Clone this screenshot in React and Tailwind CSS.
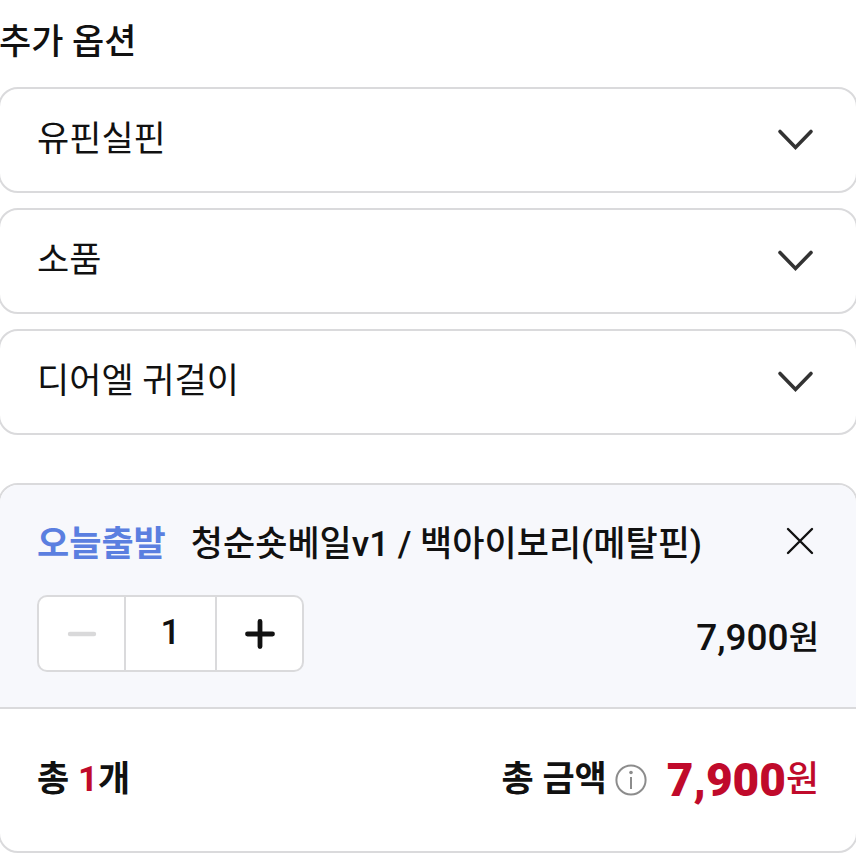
import { useState } from 'react';

const OPTIONS = [
    { id: 'hairpin', name: '유핀실핀' },
    { id: 'props', name: '소품' },
    { id: 'earring', name: '디어엘 귀걸이' },
];

const UNIT_PRICE = 7900;

const OptionSelect = ({ id, name }) => (
    <div className="relative">
        <select
            id={id}
            aria-label={name}
            defaultValue=""
            className="block h-[106px] w-full appearance-none rounded-[20px] border-2 border-[#dadadc] bg-white pr-24 pl-[37px] text-[35px] text-[#111]"
        >
            <option value="">{name}</option>
        </select>
        <svg
            className="pointer-events-none absolute top-1/2 right-[42px] h-10 w-10 -translate-y-1/2"
            viewBox="0 0 40 40"
            fill="none"
            stroke="#333"
            strokeWidth="3.6"
            strokeLinecap="round"
            aria-hidden="true"
        >
            <path d="M4 11.5 19.5 27.5 35 11.5" />
        </svg>
    </div>
);

const App = () => {
    const [quantity, setQuantity] = useState(1);
    const total = (UNIT_PRICE * quantity).toLocaleString();

    return (
        <main className="overflow-hidden bg-white font-[Roboto,'Noto_Sans_CJK_KR',sans-serif] text-[#111]">
            {/* Cards bleed past the screen edge so only their corners curve in */}
            <div className="-mx-0.5">
                <h2 className="pt-[17px] pl-px text-[35px] leading-[52px] font-medium">추가 옵션</h2>

                <div className="mt-[18px] flex flex-col gap-[15px]">
                    {OPTIONS.map((option) => (
                        <OptionSelect key={option.id} id={option.id} name={option.name} />
                    ))}
                </div>

                <section className="mt-12 overflow-hidden rounded-[20px] border-2 border-[#dadadc]">
                    {/* Selected item */}
                    <div className="border-b-2 border-[#dadadc] bg-[#f7f8fc] px-[37px] pt-[34px] pb-[35px]">
                        <div className="flex items-start justify-between">
                            <p className="flex gap-[25px] text-[35px] leading-[52px] font-medium">
                                <strong className="font-bold text-[#5b7fe0]">오늘출발</strong>
                                <span>청순숏베일v1 / 백아이보리(메탈핀)</span>
                            </p>
                            <button type="button" aria-label="삭제" className="mt-2 mr-[5px] shrink-0">
                                <svg className="h-7 w-7" viewBox="0 0 28 28" fill="none" stroke="#111" strokeWidth="2.4" strokeLinecap="round" aria-hidden="true">
                                    <path d="M2 2 26 26M26 2 2 26" />
                                </svg>
                            </button>
                        </div>

                        <div className="mt-6 flex items-center justify-between">
                            <div className="flex h-[77px] overflow-hidden rounded-[10px] border-2 border-[#dadadc] bg-white">
                                <button
                                    type="button"
                                    aria-label="수량 감소"
                                    disabled={quantity <= 1}
                                    onClick={() => setQuantity(quantity - 1)}
                                    className="flex w-[85px] items-center justify-center text-[#111] disabled:text-[#d9d9da]"
                                >
                                    <svg className="h-8 w-8" viewBox="0 0 32 32" fill="none" stroke="currentColor" strokeWidth="4.4" strokeLinecap="round" aria-hidden="true">
                                        <path d="M4 16H28" />
                                    </svg>
                                </button>
                                <input
                                    type="text"
                                    inputMode="numeric"
                                    aria-label="수량"
                                    value={quantity}
                                    onChange={(e) => setQuantity(Math.max(1, Number(e.target.value) || 1))}
                                    className="w-[93px] border-x-2 border-[#dadadc] text-center text-[35px] font-medium"
                                />
                                <button
                                    type="button"
                                    aria-label="수량 증가"
                                    onClick={() => setQuantity(quantity + 1)}
                                    className="flex w-[85px] items-center justify-center"
                                >
                                    <svg className="h-8 w-8" viewBox="0 0 32 32" fill="none" stroke="#111" strokeWidth="4.8" strokeLinecap="round" aria-hidden="true">
                                        <path d="M3.5 16H28.5M16 3.5V28.5" />
                                    </svg>
                                </button>
                            </div>
                            <p className="flex items-center pt-2 font-medium">
                                <span className="text-[37px] leading-[52px]">{total}</span>
                                <span className="text-[33px] leading-[52px]">원</span>
                            </p>
                        </div>
                    </div>

                    {/* Total */}
                    <div className="flex h-[142px] items-center justify-between px-[37px] text-[35px] font-bold">
                        <p>
                            총 <span className="text-[#c00a2b]">{quantity}</span>개
                        </p>
                        <div className="flex items-center">
                            <span>총 금액</span>
                            <button type="button" aria-label="총 금액 안내" className="mr-5 ml-2">
                                <svg className="h-8 w-8" viewBox="0 0 32 32" fill="none" stroke="#8c8c8c" strokeWidth="2" aria-hidden="true">
                                    <circle cx="16" cy="16" r="14.6" />
                                    <path d="M16 13V25" />
                                    <circle cx="16" cy="8.5" r="1.8" fill="#8c8c8c" stroke="none" />
                                </svg>
                            </button>
                            <strong className="flex items-center text-[#c00a2b]">
                                <span className="text-[46px] leading-[52px]">{total}</span>
                                <span className="text-[36px] leading-[52px] font-medium">원</span>
                            </strong>
                        </div>
                    </div>
                </section>
            </div>
        </main>
    );
};

export default App;
